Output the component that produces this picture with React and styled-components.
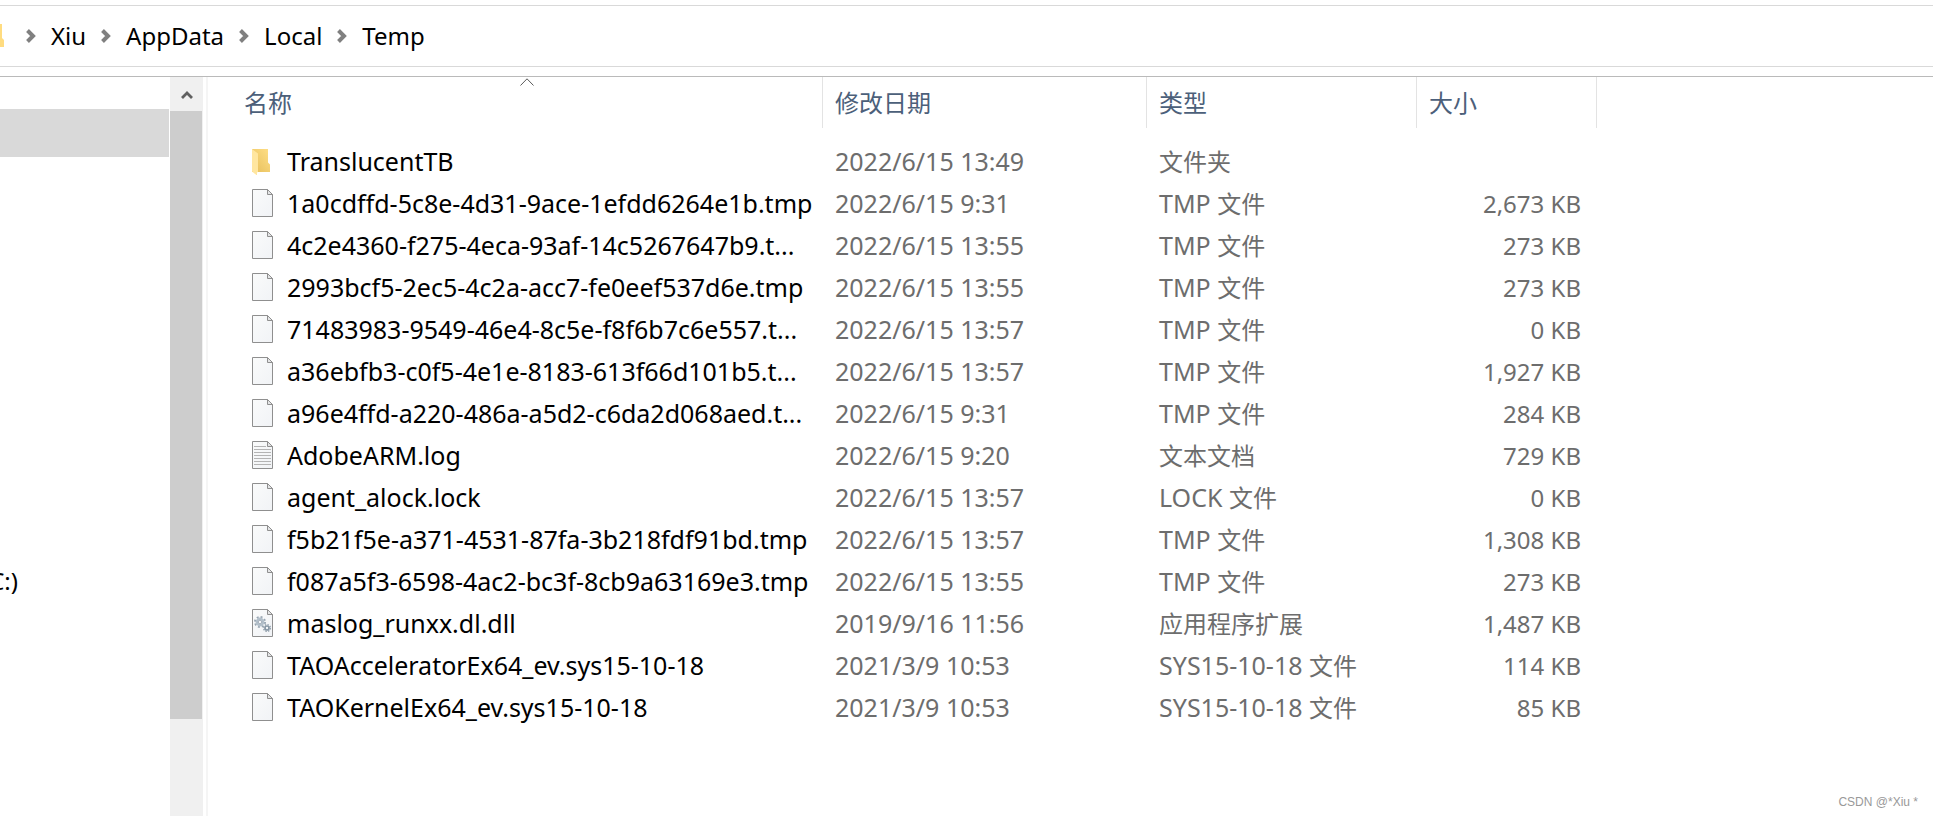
import React from "react";
import styled, { createGlobalStyle } from "styled-components";

const crumbs = ["Xiu", "AppData", "Local", "Temp"];

const files = [
  { icon: "folder", name: "TranslucentTB", date: "2022/6/15 13:49", type: "文件夹", size: "" },
  { icon: "file", name: "1a0cdffd-5c8e-4d31-9ace-1efdd6264e1b.tmp", date: "2022/6/15 9:31", ext: "TMP", type: "文件", size: "2,673 KB" },
  { icon: "file", name: "4c2e4360-f275-4eca-93af-14c5267647b9.t...", date: "2022/6/15 13:55", ext: "TMP", type: "文件", size: "273 KB" },
  { icon: "file", name: "2993bcf5-2ec5-4c2a-acc7-fe0eef537d6e.tmp", date: "2022/6/15 13:55", ext: "TMP", type: "文件", size: "273 KB" },
  { icon: "file", name: "71483983-9549-46e4-8c5e-f8f6b7c6e557.t...", date: "2022/6/15 13:57", ext: "TMP", type: "文件", size: "0 KB" },
  { icon: "file", name: "a36ebfb3-c0f5-4e1e-8183-613f66d101b5.t...", date: "2022/6/15 13:57", ext: "TMP", type: "文件", size: "1,927 KB" },
  { icon: "file", name: "a96e4ffd-a220-486a-a5d2-c6da2d068aed.t...", date: "2022/6/15 9:31", ext: "TMP", type: "文件", size: "284 KB" },
  { icon: "log", name: "AdobeARM.log", date: "2022/6/15 9:20", type: "文本文档", size: "729 KB" },
  { icon: "file", name: "agent_alock.lock", date: "2022/6/15 13:57", ext: "LOCK", type: "文件", size: "0 KB" },
  { icon: "file", name: "f5b21f5e-a371-4531-87fa-3b218fdf91bd.tmp", date: "2022/6/15 13:57", ext: "TMP", type: "文件", size: "1,308 KB" },
  { icon: "file", name: "f087a5f3-6598-4ac2-bc3f-8cb9a63169e3.tmp", date: "2022/6/15 13:55", ext: "TMP", type: "文件", size: "273 KB" },
  { icon: "dll", name: "maslog_runxx.dl.dll", date: "2019/9/16 11:56", type: "应用程序扩展", size: "1,487 KB" },
  { icon: "file", name: "TAOAcceleratorEx64_ev.sys15-10-18", date: "2021/3/9 10:53", ext: "SYS15-10-18", type: "文件", size: "114 KB" },
  { icon: "file", name: "TAOKernelEx64_ev.sys15-10-18", date: "2021/3/9 10:53", ext: "SYS15-10-18", type: "文件", size: "85 KB" },
];

function FolderIcon() {
  return (
    <svg width="22" height="28" viewBox="0 0 22 28" aria-hidden="true">
      <defs>
        <linearGradient id="folderBack" x1="0" y1="1" x2="1" y2="0">
          <stop offset="0" stopColor="#e6be5a" />
          <stop offset="1" stopColor="#ffdf87" />
        </linearGradient>
      </defs>
      <path d="M0 2H16V15.500L18 17.500V25H0Z" fill="url(#folderBack)" />
      <path d="M0 2L6 6.500V25L5 25.500V28.500L0 24.500Z" fill="#ffe6a0" />
    </svg>
  );
}

function Page({ children }) {
  return (
    <svg width="22" height="28" viewBox="0 0 22 28" aria-hidden="true">
      <defs>
        <linearGradient id="paper" x1="0" y1="0" x2="1" y2="1">
          <stop offset="0" stopColor="#fafbfb" />
          <stop offset="1" stopColor="#f1f3f6" />
        </linearGradient>
      </defs>
      <path d="M.5.5H15.500L20.500 5.500V27.500H.5Z" fill="url(#paper)" stroke="#8f8f8f" />
      <path d="M15.500.5V5.500H20.500Z" fill="#e4e5e6" stroke="#8f8f8f" />
      {children}
    </svg>
  );
}

function FileIcon({ kind }) {
  if (kind === "folder") return <FolderIcon />;
  if (kind === "log") {
    return (
      <Page>
        <path
          d="M2 5.500H14M2 8.500H19M2 11.500H19M2 14.500H19M2 17.500H19M2 20.500H19M2 23.500H19"
          stroke="#b4b4b4"
          fill="none"
        />
      </Page>
    );
  }
  if (kind === "dll") {
    return (
      <Page>
        <circle cx="8" cy="13" r="5" fill="none" stroke="#98a5b1" strokeWidth="2" strokeDasharray="1.9 2.030" />
        <circle cx="8" cy="13" r="3.200" fill="none" stroke="#b3c0cb" strokeWidth="2.400" />
        <circle cx="8" cy="13" r="1.800" fill="#f6f8fa" stroke="#8e9ba8" strokeWidth=".8" />
        <circle cx="15" cy="19" r="3.400" fill="none" stroke="#98a5b1" strokeWidth="1.400" strokeDasharray="1.500 1.170" />
        <circle cx="15" cy="19" r="2" fill="#f6f8fa" stroke="#8797a5" strokeWidth="1.700" />
      </Page>
    );
  }
  return <Page />;
}

function Chevron() {
  return (
    <svg width="10" height="14" viewBox="0 0 10 14" aria-hidden="true">
      <path d="M1.500 1.500L7 7L1.500 12.500" fill="none" stroke="#808080" strokeWidth="4" />
    </svg>
  );
}

export default function App() {
  return (
    <Window>
      <GlobalStyle />
      <AddressBar aria-label="Address">
        <CrumbFolder width="5" height="24" viewBox="0 0 5 24" aria-hidden="true">
          <path d="M0 0H2V14L4 16V23H0Z" fill="#ffdc80" />
        </CrumbFolder>
        {crumbs.map((crumb) => (
          <Crumb key={crumb}>
            <Chevron />
            <CrumbLink href="#">{crumb}</CrumbLink>
          </Crumb>
        ))}
      </AddressBar>

      <Body>
        <TreePane>
          <TreeItem $selected />
          <DriveLink href="#">C:)</DriveLink>
        </TreePane>
        <Scrollbar>
          <ScrollButton aria-label="Scroll up">
            <svg width="12" height="10" viewBox="0 0 12 10" aria-hidden="true">
              <path d="M1 9L6 4L11 9" fill="none" stroke="#606060" strokeWidth="2.800" />
            </svg>
          </ScrollButton>
          <Track>
            <Thumb />
          </Track>
        </Scrollbar>

        <Content>
          <Table>
            <colgroup>
              <Col $width={591} />
              <Col $width={324} />
              <Col $width={270} />
              <Col $width={180} />
            </colgroup>
            <thead>
              <tr>
                <HeadCell>
                  名称
                  <SortMark width="14" height="8" viewBox="0 0 14 8" aria-hidden="true">
                    <path d="M.5 7.500L7 .8L13.500 7.500" fill="none" stroke="#5a5a5a" />
                  </SortMark>
                </HeadCell>
                <HeadCell>修改日期</HeadCell>
                <HeadCell>类型</HeadCell>
                <HeadCell>大小</HeadCell>
              </tr>
            </thead>
            <tbody>
              {files.map((file) => (
                <tr key={file.name}>
                  <Cell>
                    <FileName>
                      <FileIcon kind={file.icon} />
                      {file.name}
                    </FileName>
                  </Cell>
                  <Cell>{file.date}</Cell>
                  <Cell>
                    {file.ext && `${file.ext} `}
                    <TypeLabel>{file.type}</TypeLabel>
                  </Cell>
                  <SizeCell>{file.size}</SizeCell>
                </tr>
              ))}
            </tbody>
          </Table>
        </Content>
      </Body>
      <Watermark>CSDN @*Xiu *</Watermark>
    </Window>
  );
}

const GlobalStyle = createGlobalStyle`
  * {
    box-sizing: border-box;
  }
  body {
    margin: 0;
    background: #fff;
    color: #000;
    font-family: "Noto Sans", "Noto Sans CJK SC", sans-serif;
    font-size: 24px;
  }
  svg {
    display: block;
    flex: none;
  }
`;

const Window = styled.div`
  position: relative;
  display: flex;
  flex-direction: column;
  min-height: 100vh;
  padding-top: 5px;
`;

const AddressBar = styled.nav`
  display: flex;
  align-items: center;
  height: 62px;
  margin-bottom: 9px;
  border-top: 1px solid #d9d9d9;
  border-bottom: 1px solid #d9d9d9;
`;

const CrumbFolder = styled.svg`
  margin-right: 6px;
`;

const Crumb = styled.span`
  display: flex;
  align-items: center;
  gap: 15px;
  padding-left: 15px;
`;

const CrumbLink = styled.a`
  color: #000;
  line-height: 32px;
  text-decoration: none;
`;

const Body = styled.div`
  display: flex;
  flex: 1;
  border-top: 1px solid #bababa;
`;

const TreePane = styled.aside`
  flex: none;
  width: 170px;
  padding: 32px 1px 0 0;
`;

const TreeItem = styled.div`
  height: 48px;
  background: ${(p) => (p.$selected ? "#d9d9d9" : "transparent")};
`;

const DriveLink = styled.a`
  display: flex;
  justify-content: flex-end;
  width: 18px;
  margin-top: 400px;
  overflow: hidden;
  color: #000;
  line-height: 48px;
  text-decoration: none;
`;

const Scrollbar = styled.div`
  display: flex;
  flex: none;
  flex-direction: column;
  width: 33px;
  background: #f0f0f0;
`;

const ScrollButton = styled.button`
  display: flex;
  align-items: center;
  justify-content: center;
  height: 34px;
  padding: 0;
  border: 0;
  background: transparent;
`;

const Track = styled.div`
  flex: 1;
  padding-right: 1px;
`;

const Thumb = styled.div`
  height: 608px;
  background: #cdcdcd;
`;

const Content = styled.main`
  flex: 1;
  margin-left: 3px;
  padding-left: 24px;
  border-left: 2px solid #f5f5f5;
`;

const Table = styled.table`
  width: 1365px;
  border-collapse: separate;
  border-spacing: 0;
  table-layout: fixed;

  & thead::after {
    content: "";
    display: block;
    height: 13px;
  }
`;

const Col = styled.col`
  width: ${(p) => p.$width}px;
`;

const HeadCell = styled.th`
  position: relative;
  height: 51px;
  padding: 0 12px;
  border-right: 1px solid #e3e3e3;
  color: #4c607a;
  font-weight: 400;
  line-height: 36px;
  text-align: left;
`;

const SortMark = styled.svg`
  position: absolute;
  top: 1px;
  left: 50%;
  transform: translateX(-50%);
`;

const Cell = styled.td`
  height: 42px;
  padding: 0 16px 2px 12px;
  color: #6d6d6d;
  font-size: 25px;
  line-height: 36px;
  white-space: nowrap;
`;

const SizeCell = styled(Cell)`
  padding-bottom: 0;
  font-size: 24px;
  text-align: right;
`;

const TypeLabel = styled.span`
  font-size: 24px;
`;

const FileName = styled.span`
  display: flex;
  align-items: center;
  gap: 13px;
  padding-left: 8px;
  color: #000;
`;

const Watermark = styled.small`
  position: absolute;
  right: 15px;
  bottom: 7px;
  color: #999;
  font-family: "Liberation Sans", sans-serif;
  font-size: 12px;
  line-height: 14px;
`;
